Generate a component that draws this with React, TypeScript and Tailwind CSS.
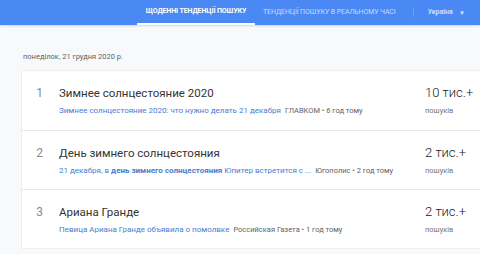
import React from 'react';

type Trend = {
  rank: number;
  title: string;
  snippet: React.ReactNode;
  source: string;
  count: string;
};

const trends: Trend[] = [
  {
    rank: 1,
    title: 'Зимнее солнцестояние 2020',
    snippet: 'Зимнее солнцестояние 2020: что нужно делать 21 декабря',
    source: 'ГЛАВКОМ • 6 год тому',
    count: '10 тис.+',
  },
  {
    rank: 2,
    title: 'День зимнего солнцестояния',
    snippet: (
      <>
        21 декабря, в <b className="font-bold">день зимнего солнцестояния</b> Юпитер встретится с ...
      </>
    ),
    source: 'Югополис • 2 год тому',
    count: '2 тис.+',
  },
  {
    rank: 3,
    title: 'Ариана Гранде',
    snippet: 'Певица Ариана Гранде объявила о помолвке',
    source: 'Российская Газета • 1 год тому',
    count: '2 тис.+',
  },
];

export default function App() {
  return (
    <div
      className="h-[254px] w-[480px] overflow-hidden bg-[#f8f9fa]"
      style={{ fontFamily: 'Roboto, "Noto Sans", sans-serif' }}
    >
      {/* header */}
      <div className="flex h-[25px] items-stretch bg-[#4a89f3] pl-[137px] shadow-[0_1px_2px_rgba(0,0,0,0.15)]">
        <div className="flex w-[118px] items-center justify-center border-b-2 border-white text-[7px] font-bold tracking-[-0.1px] text-white">
          ЩОДЕННІ ТЕНДЕНЦІЇ ПОШУКУ
        </div>
        <div className="ml-[8px] flex items-center text-[7px] tracking-[-0.1px] text-white/70">
          ТЕНДЕНЦІЇ ПОШУКУ В РЕАЛЬНОМУ ЧАСІ
        </div>
        <div className="ml-[17px] mr-[14px] my-[8px] w-px bg-white/20" />
        <div className="flex items-center gap-[6px] text-[7px] font-medium text-white/80">
          Україна
          <span className="text-[6px]">▼</span>
        </div>
      </div>

      {/* date */}
      <div className="pl-[23px] pt-[26px] text-[7.5px] text-[#5f6368]">понеділок, 21 грудня 2020 р.</div>

      {/* list */}
      <div className="ml-[22px] mt-[9px] w-[470px] bg-white shadow-[0_0_1px_rgba(0,0,0,0.25)]">
        {trends.map((t, i) => (
          <div
            key={t.rank}
            className={`flex h-[59px] items-start ${i > 0 ? 'border-t border-[#e8e8e8]' : ''}`}
          >
            <div className="w-[21px] pt-[14px] text-right text-[12px] leading-[16px] text-[#8a8a8a]">
              {t.rank}
            </div>
            <div className="ml-[16px] w-[366px] pt-[14px]">
              <div className="text-[11.5px] leading-[16px] text-[#333333]">{t.title}</div>
              <div className="mt-[5px] whitespace-nowrap text-[8px] leading-[10px]">
                <span className="text-[#4a7bd0]">{t.snippet}</span>
                <span className="ml-[4px] text-[7.5px] text-[#5f6368]">{t.source}</span>
              </div>
            </div>
            <div className="pt-[13px]">
              <div className="text-[13px] font-light leading-[17px] text-[#212121]">{t.count}</div>
              <div className="mt-[5px] text-[7.5px] leading-[10px] text-[#757575]">пошуків</div>
            </div>
          </div>
        ))}
      </div>
    </div>
  );
}
